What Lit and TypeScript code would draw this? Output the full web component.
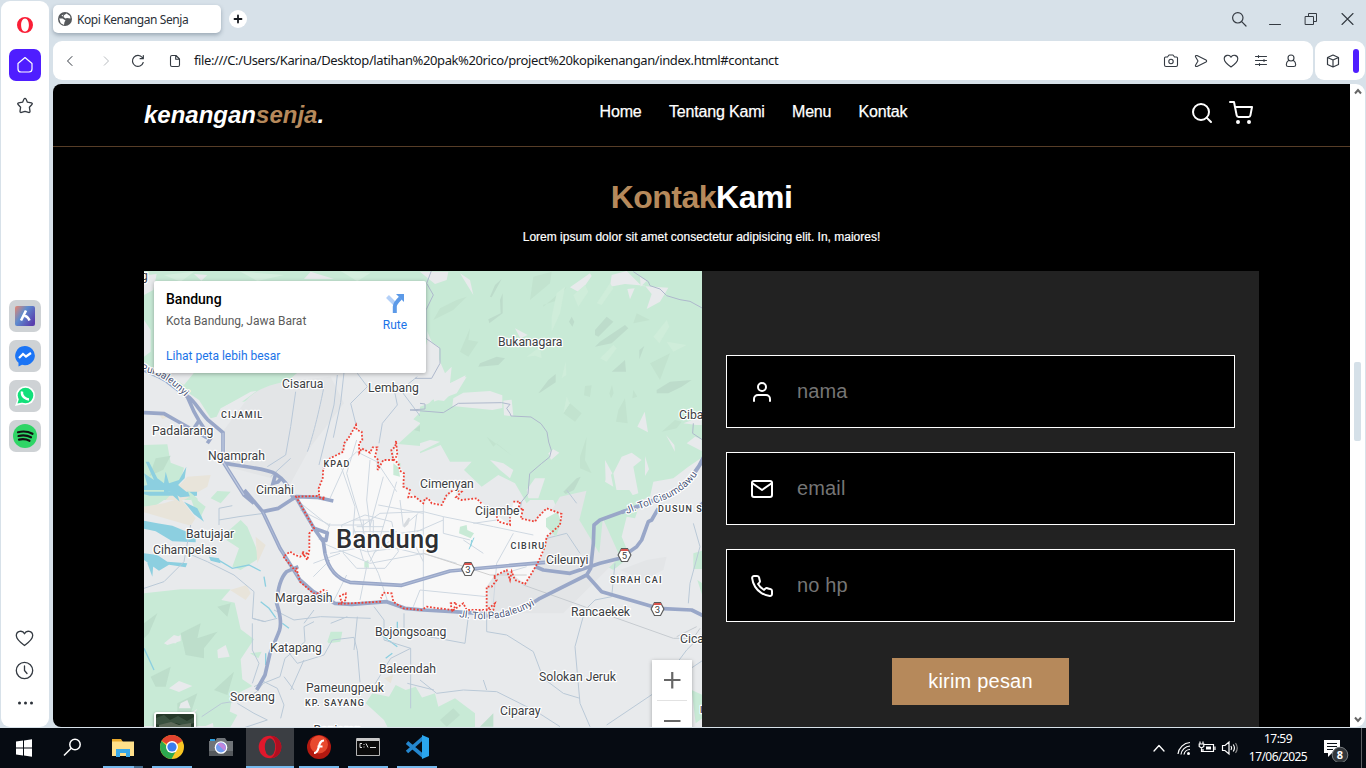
import { LitElement, html, css, svg } from "lit";
import { customElement } from "lit/decorators.js";

type Label = [number, number, string, string?];

const LABELS: Label[] = [
  [498, 346, "Bukanagara"], [282, 388, "Cisarua"], [368, 392, "Lembang"], [221, 417.5, "CIJAMIL", "caps"],
  [152, 435, "Padalarang"], [208, 460, "Ngamprah"], [323.5, 467, "KPAD", "caps"], [256, 494, "Cimahi"],
  [420, 488, "Cimenyan"], [475, 514.5, "Cijambe"], [679, 419, "Ciba"], [658, 512, "DUSUN S", "caps"],
  [186, 538, "Batujajar"], [153, 554, "Cihampelas"], [510.5, 549, "CIBIRU", "caps"], [546, 564, "Cileunyi"],
  [610, 583, "SIRAH CAI", "caps"], [275, 602, "Margaasih"], [571, 616, "Rancaekek"], [375, 636, "Bojongsoang"],
  [680, 643, "Cica"], [270, 652, "Katapang"], [379, 673, "Baleendah"], [539, 681, "Solokan Jeruk"],
  [306, 692, "Pameungpeuk"], [305, 706, "KP. SAYANG", "caps"], [230, 701, "Soreang"], [500, 715, "Ciparay"],
  [313.5, 734, "Banjaran"], [700, 713, "I", "caps"], [141, 280, "g"],
];

@customElement("city-map")
class CityMap extends LitElement {
  static styles = css`
    :host { display: block; position: relative; overflow: hidden; background: #e8eaec; }
    .canvas { display: block; width: 558px; height: 456px; }
    .place { font: 12.2px Roboto, sans-serif; fill: #3c4043; stroke: #fff; stroke-width: 2.4px; paint-order: stroke; stroke-linejoin: round; }
    .caps { font-size: 9px; font-weight: 500; letter-spacing: 1.1px; }
    .city { font-size: 25.5px; font-weight: 500; fill: #2d2f33; stroke-width: 3px; }
    .way { font-size: 10.1px; fill: #4a5578; }
    .card { position: absolute; left: 10px; top: 10px; width: 272px; height: 92px; box-sizing: border-box; padding: 10px 12px;
      background: #fff; border-radius: 2px; box-shadow: 0 1px 4px rgba(0,0,0,.3); display: flex; justify-content: space-between;
      font-family: Roboto, sans-serif; font-size: 12px; }
    .name { font-size: 14px; font-weight: 500; line-height: 16px; color: #000; }
    .addr { color: #5b5b5b; line-height: 16px; margin-top: 6px; }
    .more { color: #1a73e8; line-height: 16px; margin-top: 19px; }
    .route { width: 38px; color: #1a73e8; text-align: center; line-height: 14px; }
    .route svg { display: block; margin: 2px auto 5px; }
    .zoom { position: absolute; right: 10px; top: 389px; width: 40px; height: 81px; background: #fff; box-shadow: 0 1px 4px rgba(0,0,0,.3); }
    .zoom svg { display: block; }
    .sat { position: absolute; left: 10px; top: 441px; width: 38px; height: 38px; border: 2px solid #fff; border-radius: 3px; box-shadow: 0 1px 3px rgba(0,0,0,.4); background: #263a2a; }
  `;

  render() {
    return html`
      <svg class="canvas" viewBox="144 271 558 456">
        <!-- north-west forest -->
        <g transform="translate(144 270) scale(.33333)">
          <path fill="#c8ead6" d="M0 0H850V70L866 110 850 150V300L800 210 700 100 30 100V200L50 300 120 345 150 308 460 308 425 338 405 362 375 358 300 395 275 392 230 415 218 440 200 445 165 390 128 365 60 320 0 275Z"/>
          <path fill="#d5efdf" d="M60 15l90-10-40 30zM290 5l130 10-80 18zM590 3l90 5-40 26z"/>
          <path fill="#e8eaec" d="M0 40L12 15 38 12 28 60 0 75zM0 150l20 30v65L0 260zM150 12l40 3-18 17zM500 5l70 22H480zM240 410l80-45 18-2-48 35z"/>
          <path fill="#e3e5e7" d="M300 400C350 330 460 330 560 320L600 400 500 530 440 640 250 590 240 480Z"/>
          <path fill="#c8ead6" d="M0 525l70-2 10 55 40 15-12 45-20 20-30 32-58-10zM20 620l60-10 5 22 70 40-15 18H40zM870 385l-62 63 22 12-68 62 108 10zM750 575l20 5-4 42-14-8z"/>
          <path fill="#bddfcb" d="M35 565l45-8-22 42-42 20zM810 480l50-40v20l-30 25z"/>
          <path fill="#e8e4da" d="M130 620l70-5-10 35-70 40H65zM40 425l45 12-30 10z"/>
          <path fill="#8ccfe0" d="M0 610l30 20-25-55 10 0 25 50 20 15 5-35 10 35 30-10 22-40-5 35-20 20 25 20 32 0v12l-50 5-30-18-40 12-20 22-5-22-24 22V650l20-5z"/>
          <path fill="none" stroke="#b9c8d8" stroke-width="3" d="M455 365L440 470 425 555 370 590M540 350C520 450 500 520 490 545M600 308l-10 90-22 105M640 310l30 40-50 50 20 80-20 20M750 355l10 50-45 55-10 60M380 620l60-55M580 315l-10 90-45 180M820 320l-50 40 60 80"/>
          <path fill="none" stroke="#99a7c8" stroke-width="11" d="M0 300C50 320 90 340 130 378 150 390 165 420 190 448L237 488 237 575 300 675 330 700M0 428l60 3 50 28 80 45M70 335L130 380 150 425 165 452 200 505 190 520M165 452L150 475M237 578C290 590 370 595 395 612S430 640 450 690M395 612l-8 28 15-4 12-14"/>
          <path fill="none" stroke="#bdc8df" stroke-width="4" d="M0 300C50 320 90 340 130 378M237 488V575L300 675"/>
        </g>
        <!-- north-east highlands -->
        <g transform="translate(420 270) scale(.33333)">
          <path fill="#c8ead6" d="M20 0H850V560L805 590 760 625 700 635 690 680 640 700H660L645 745 620 740 605 800 630 860 580 900 510 860 480 690 445 695 430 760 400 690H330L320 700 285 640 235 615 185 650 132 600 155 575 90 575 62 525 0 550V410L110 370 140 320 90 340 95 290 75 310 20 180Z"/>
          <path fill="#e8eaec" d="M0 5h85l-5 25-35 12-25-20zM120 10l30 20 10 45zM450 52l60-42 5 8-35 50zM570 50l5-35 45-12 45 45 80 5-25 42-40 22 15-45-20-25-60-5zM622 57l22-2-14 33zM660 20l20 12-18 18zM285 175l38 20-22 10zM652 470l22-45 10 62zM738 495l25 30 2 20zM100 385l30-17 80-5 37 13v38l-30 6-120-12zM250 392l25-3 5 50-28-3zM555 570l22 40-20 25zM675 558l12 40-12 20zM580 610l25-50 30-12 30 22-25 20 15 80-60 20zM385 550l15-12 18 10-25 22zM210 570l40 10 30 20-10 25-30-25zM320 660l25-35 30 0-20 60-30 0zM790 460l55-20v25l-15 0zM800 520l25-20 20 8v35zM760 690l50-60 36-15v70z"/>
          <path fill="#e8eaec" d="M0 300l22-90 35 20v50L90 340l47-24-5 15-60 62-72-10zM0 545l60-30-30-5L0 520zM555 635l15-35 10 50zM420 700l20-10 5 20z"/>
          <path fill="#bddccb" d="M210 80l15-35 20-18-30 55zM240 90l8-20v60l-40 30-3-12 37-18zM525 180l35-40 20 15-45 45-10-5zM540 215l75-50 10 10-50 45-50 10zM575 305l40-35 3 35zM658 240l15-12-15 40zM355 370l30-40 22-18v25l-45 30zM710 360l40-25 65-5-30 20-40 20-35 0zM430 665l40-40 12-5-20 40-25 12zM455 140l8 15-6 15-10-15zM180 280l50-20 25 5-20 20-60 5z"/>
          <path fill="#c2e3cf" d="M60 115l50-25 30-10-40 40-60 30zM340 20l55-15-5 35-60 50zM595 420l20-35 8 75-35-5zM430 430l20-30 35 30-20 25zM495 348l20-2-5 35-18-5zM568 370l8-25 5 25-8 15zM640 360l12 20-15 5zM725 485l40-35 20 5-15 20zM120 245l30-70-5 35 30 5-30 45zM280 560l-50-40 20-20-30 30-20-30zM370 105l45-15 25-40-70 60zM480 560l20-60-5 70 20 40-35-15zM650 130l40 20-50 10zM690 280l60-30-30 80z"/>
          <path fill="#cfedda" d="M395 140l15-70 25-20-15 80-25 55zM460 75l35-30 10 20-30 45zM530 100l40-60 10 15-35 50zM425 325l12-50 2 40zM430 430l10-50 10 20zM540 265l40-40 10 10-30 40zM740 215l60 10-40 20zM700 200l40-50 8 20-30 50zM320 260l40-30 5 35-20-8z"/>
          <path fill="none" stroke="#aeb8cc" stroke-width="3" d="M35 0L20 40l20 35-22 45v85l42 30v45L35 325l-50 0M640 5l45 30 5 12 30 10 20 20 40 12 30 5 40 22M0 400l15 2v15l-45 3 100 8 45-28 130-2 25 5-10 12 10 15 3 8 60 3 30 20 18 25 5 30 8 25-5 20-25 20-35 30-5 60-20 25-10 60M820 460l-2 30 30 20"/>
          <path fill="none" stroke="#99a7c8" stroke-width="12" d="M858 545C815 660 730 680 605 727"/>
        </g>
        <!-- south-west plains, reservoir and hills -->
        <g transform="translate(144 490) scale(.33333)">
          <path fill="#c8ead6" d="M0 310l110-12 150 0-28 32 40 8 18 80 40 30-40 60 5 60 30 20-60 30-10 60-70 30H0zM130 0l30 25 15 60-20-20-15-40zM250 125l40-35 20 20 25 60 10 35-55 35-25-10 20-55-38-25zM0 0h60v30l-30 20-30 0zM200 25l20-22 40 2-30 35zM140 15l45 35-15 30zM550 455l10-30 35 0-6 30-35 5zM318 490l35-5-10 20zM205 690l30-35 45 20-20 35-50 10zM665 640l20-30 50 10 20-35 30 15 30-10 35 60v80H740l-20-40zM660 215l14 0 4 15-16 6z"/>
          <path fill="#b8d9c6" d="M0 400l40-30-25 60-15 15zM110 430l60-30-10 45 60-20-40 50 0 30-55-10zM20 560l60-30-15 60-30 0zM210 600l60-55-20 70zM100 640l60-30-20 60-40 0zM220 350l40-10-10 40z" opacity=".7"/>
          <path fill="#e8eaec" d="M60 460l30-25 18 5-12 20zM220 480l25-15 12 35-35 5zM75 595l30-22 40 15-40 18zM110 640l20-10 10 25-35 0zM110 685l50-28-20 30zM160 30l30-15-10 25zM60 460l50-25v18l-40 12z"/>
          <path fill="#e8e4da" d="M60 40l50-15 45 60-15 22-140-40V50zM335 140l30 25-25 55zM258 300l50-15 12 25-15 20zM720 565l28-10-8 25z"/>
          <path fill="#8ccfe0" d="M0 92l40 8 45 7 40 17 30 15 0 18-70-3-50-30-35-8zM0 5l70 0 25-5 12 35-20-18-70 0-20-5zM0 190l40 5 30 20 60 5-5 12-50-8-30 18-45-32zM195 200l30 5 5 15-30-8zM120 35l40 20 20 40-30-22zM30 200l-5 60-15-40z"/>
          <path fill="none" stroke="#8ccfe0" stroke-width="4" d="M215 205l50 30 50-10 35 18M350 335l25 20 20 28M0 475l30 65M415 400l20 15M700 425l60 45M760 395v40M725 505l20-15M365 490l0 35M360 260l5 30"/>
          <path fill="none" stroke="#bac9d7" stroke-width="3" d="M225 105V55l40-8M225 90l60-10 75-10M120 185l70 30 80 40 60 50-5 80 40 10M0 295l60-20 60-60 20-110M325 385l35 10 40-10M390 360l60 30 80-10 150 5M480 400l30-40M510 395l-30 15 3 45-60 50-15 55-50 20-20 25-40 25-65 10-60 40M330 590l30-15 40 20 20 50-10 40M325 400v80l20 40-20 60M420 470l40 50 80-25 25-45 65-8 10 40 8 95M440 600l40-90M450 600l-30-40M560 400l50-20M640 380l-10 100M690 350l30 40 0 60 80 25v180M780 370v50l-30 10M800 475l-60 30-55 90M870 600l-80-20M280 640l50 30 40 20-90 30"/>
        </g>
        <!-- south-east plains -->
        <g transform="translate(420 490) scale(.33333)">
          <path fill="#e3e5e7" d="M360 120L420 20 510 0 600 200 430 370 220 370 200 270ZM600 240l80-30 60-10-10 40-60 30z"/>
          <path fill="#c8ead6" d="M820 190l28-8v55l-28 0zM832 270l16 10v40zM815 600l32 15v70l-20 15zM0 625l45-15 10 40 50-25 60 45 0 45H0zM500 0h128l20 30-100 60-10 100-60-100z"/>
          <path fill="#bfe0cd" d="M60 690l40-35 20 20-40 35zM180 710l40-40 0 40z"/>
          <path fill="none" stroke="#bac9d7" stroke-width="3" d="M145 380l-10 80-135-25M200 370l0 55 60 10 80 50 30 80 60 45 50 15M480 640l-15-170 30-110 30-30 50-10 10-100M480 640l30 70M0 570l50 40 80-10 100 5 120 60 70 45M200 600l-10-30M820 100l20 70-30 110-5 60M850 430l-50 50-60 80M850 510L560 705M440 0l30 40M360 150l80-20 40 60"/>
          <path fill="none" stroke="#c6cbd0" stroke-width="3" d="M310 285l450 160h60l20-30M770 440l60-30"/>
          <path fill="none" stroke="#99a7c8" stroke-width="11" stroke-linejoin="round" d="M612 64L540 90 522 105 520 160 512 235 500 255 360 325Q290 375 190 378M860 30l-28 24M715 55l-20 35-10 5-20 55-15 20-50 35-60 15-90 30-80-10-35-15M500 255l45 50 170 50 100 5 40 20"/>
        </g>
        <!-- city boundary, roads and motorways -->
        <g transform="translate(280 410) scale(.33333)">
          <path fill="#f8f8f8" d="M118 262L118 230 128 205 130 175 150 145 190 125 205 85 228 45 245 65 240 125 270 120 290 110 288 180 310 150 340 150 348 92 355 160 372 190 370 230 405 260 430 280 445 265 485 285 520 240 545 270 590 265 650 315 690 345 700 275 720 280 725 325 765 335 800 295 845 312 840 345 800 380 785 440 735 522 680 480 640 500 620 530 620 600 520 600 400 600 340 575 160 582 100 550 60 515 10 440 30 425 80 440 95 360 50 262Z"/>
          <path fill="#c8ead6" d="M798 325l35-20 10 30-15 45-30-30zM340 160l15 12 5 28-20-5zM540 350l20-5 2 15 20 10-10 15-35-15zM253 455l12-5 2 23-14 0z"/>
          <path fill="none" stroke="#cfd8e1" stroke-width="3" d="M60 300l90 45 100 0 50-35 130-5 60 15 150 30 120 25M150 265l50-110 30-30 60 30 60 90M430 285v320M490 320v50l80 20M580 340l70-10M700 370l-50 90-10 120M230 90l-30 100 50 170 15 70 30 60 30 90M180 160l45 130-5 60 30 100M270 150l-10 120 10 80M310 200l-40 150M350 215l-60 200-20 40M295 285l135 25M150 340l-20 60 140 60 160-30 100 30M150 430l80-15 30 10 90-10 80 20M190 430l40 45h85l40-50-20-90-80-20-70 30zM260 470l-20 100M370 350l-10-80M280 430l80-60 70-10M100 500l50-50M160 575l40-80M220 330h60v50h-60zM230 350h80M250 330v80M270 330v80M220 365h130M400 590l20-50 200 20M640 500l100-30M100 460l80-30M410 315l-10 80 30 60M380 340l35-30M50 270l100 80M490 330l-80 35M610 430l-60-40"/>
          <path fill="none" stroke="#cfcfcf" stroke-width="3" d="M430 430l200 65 110 0"/>
          <path fill="none" stroke="#8cd1df" stroke-width="3" d="M582 383l-15 35M575 390l-3 20"/>
          <path fill="#d6dade" d="M370 345l15-22 5 2-5 18-12 10z"/>
          <g fill="none" stroke="#99a7c8" stroke-width="11" stroke-linejoin="round">
            <path d="M-107 240L-52 305 0 415 60 510 100 545 165 580 215 583 320 575 375 595 430 600 520 605 620 612"/>
            <path d="M-52 305L-5 295 48 260 110 262 160 273M48 262L102 355 130 395 135 430Q150 500 210 517L365 526 510 483 795 457M102 355l40 14-4 22-20-8"/>
            <path d="M55 470L20 485Q-5 510-10 580 10 640-5 670L-30 730-45 795-70 840"/>
          </g>
          <g fill="none" stroke="#b1bdd8" stroke-width="3"><path d="M135 430Q150 500 210 517L365 526 510 483 795 457M-52 305L0 415 60 510"/></g>
          <path fill="none" stroke="#ee4136" stroke-width="5.4" stroke-dasharray="5.4 5.2" d="M133 268L118 262 116 235 128 205 130 175 150 145 190 125 192 100 205 85 228 45 230 60 245 65 247 90 237 100 238 128 245 115 270 128 278 112 292 112 285 140 295 150 293 180 310 150 340 150 334 120 346 110 348 92 352 135 342 150 355 160 360 182 372 190 370 230 390 240 385 262 405 260 430 280 435 265 445 265 455 280 485 285 500 255 520 240 545 245 528 262 545 270 590 265 604 280M650 318L655 335 690 345 690 322M700 275L720 275 715 300 730 295 722 325 765 335 775 320 800 295 845 312 840 345 800 380 795 410 775 455 755 490 735 522 705 510 695 485 690 510 680 480 640 500 650 510 635 530 620 530 620 600 645 580 640 600 560 600 550 580 520 600 530 578 512 580 515 600 440 590 425 600 370 595 340 575 335 550 310 548 303 565M303 575L175 582 198 570 197 550 180 558 185 580M143 545L130 540 115 550 100 550 60 515 48 470M48 485L10 440 30 425 45 435 60 440 80 430 65 425 82 450 88 420 88 370 102 355 48 260 110 258 133 268 130 260"/>
        </g>
        ${[[468, 569, "3"], [624.5, 555, "5"], [657.5, 609, "3"]].map(([x, y, n]) => svg`
          <path d="M${+x - 3} ${+y - 6.5}h6l3.4 6.5-3.4 6.5h-6l-3.4-6.5z" fill="#fff" stroke="#5c5c5c" stroke-width="1.2"/>
          <path d="M${+x - 3} ${+y - 6}h6l1.2 2h-8.4z" fill="#d9534c"/>
          <text class="place" x=${x} y=${+y + 4} text-anchor="middle" style="font-size:9.5px;stroke:none">${n}</text>`)}
        ${LABELS.map(([x, y, t, k]) => svg`<text class="place ${k ?? ""}" x=${x} y=${y}>${t}</text>`)}
        <text class="place city" x="336" y="547.5" textLength="103">Bandung</text>
        <path id="cis" d="M627 514C655 502 683 499 700 470" fill="none"/>
        <path id="pad" d="M459 617C490 622 512 619 545 599" fill="none"/>
        <path id="pur" d="M140 371C160 374 171 382 190 402" fill="none"/>
        <text class="place way"><textPath href="#cis">Jl. Tol Cisumdawu</textPath></text>
        <text class="place way"><textPath href="#pad">Jl. Tol Padaleunyi</textPath></text>
        <text class="place way"><textPath href="#pur">Purbaleunyi</textPath></text>
      </svg>
      <div class="card">
        <div><div class="name">Bandung</div><div class="addr">Kota Bandung, Jawa Barat</div><div class="more">Lihat peta lebih besar</div></div>
        <div class="route">
          <svg width="20" height="20" viewBox="0 0 20 20"><path d="M2.5 3.5L10 11" stroke="#b3d0f8" stroke-width="4"/><path d="M9.8 20V13.5Q9.8 10.5 15.5 5" fill="none" stroke="#5c9ae8" stroke-width="4"/><path d="M11 1h8v8z" fill="#5c9ae8"/></svg>
          Rute
        </div>
      </div>
      <div class="sat"><svg width="38" height="14" viewBox="0 0 38 14"><path d="M0 4l8-3 6 5 8-4 9 5 7-4v6l-9 3-9-3-9 4-11-3z" fill="#3a5140"/><path d="M3 11l12-3 8 3 12-2v5H3z" fill="#5d6a5a"/></svg></div>
      <div class="zoom"><svg width="40" height="81" viewBox="0 0 40 81"><path d="M12 20h16.500M20.250 12v16.500M12 61h16.500" stroke="#666" stroke-width="2.2"/><path d="M5 40.500h30" stroke="#e2e2e2"/></svg></div>
    `;
  }
}

const line = (w: number, h: number, body: unknown, sw = 1.2, color = "#343a42") => html`
  <svg width=${w} height=${h} viewBox="0 0 ${w} ${h}" fill="none" stroke=${color} stroke-width=${sw} stroke-linecap="round" stroke-linejoin="round">${body}</svg>`;
const feather = (body: unknown) => html`
  <svg width="24" height="24" viewBox="0 0 24 24" fill="none" stroke="#fff" stroke-width="2" stroke-linecap="round" stroke-linejoin="round">${body}</svg>`;

const ICONS = {
  search: feather(svg`<circle cx="11" cy="11" r="8"/><path d="M21 21l-4.350-4.350"/>`),
  cart: feather(svg`<circle cx="9" cy="21" r="1"/><circle cx="20" cy="21" r="1"/><path d="M1 1h4l2.680 13.390a2 2 0 0 0 2 1.610h9.720a2 2 0 0 0 2-1.610L23 6H6"/>`),
  user: feather(svg`<path d="M20 21v-2a4 4 0 0 0-4-4H8a4 4 0 0 0-4 4v2"/><circle cx="12" cy="7" r="4"/>`),
  mail: feather(svg`<path d="M4 4h16c1.100 0 2 .9 2 2v12c0 1.100-.9 2-2 2H4c-1.100 0-2-.9-2-2V6c0-1.100.9-2 2-2z"/><path d="M22 6l-10 7L2 6"/>`),
  phone: feather(svg`<path d="M22 16.920v3a2 2 0 0 1-2.180 2 19.790 19.790 0 0 1-8.630-3.070 19.500 19.500 0 0 1-6-6 19.790 19.790 0 0 1-3.070-8.670A2 2 0 0 1 4.110 2h3a2 2 0 0 1 2 1.720 12.840 12.840 0 0 0 .7 2.810 2 2 0 0 1-.45 2.110L8.090 9.910a16 16 0 0 0 6 6l1.270-1.270a2 2 0 0 1 2.110-.45 12.840 12.840 0 0 0 2.810.7A2 2 0 0 1 22 16.920z"/>`),
};

@customElement("coffee-page")
class CoffeePage extends LitElement {
  static styles = css`
    :host { display: block; background: #000; color: #fff; font-family: "Liberation Sans", Arial, sans-serif; overflow: hidden; border-radius: 8px 0 0 8px; }
    header { height: 62px; border-bottom: 1px solid #573d27; padding: 0 97px 0 91px; display: flex; justify-content: space-between; }
    .logo { font-size: 24px; font-weight: 700; font-style: italic; line-height: 28px; padding-top: 17px; width: 410px; }
    .accent { color: #b6895b; }
    nav { display: flex; gap: 27.3px; font-size: 16px; line-height: 18px; padding-top: 19px; letter-spacing: -.17px; -webkit-text-stroke: .25px #fff; }
    .tools { display: flex; justify-content: flex-end; gap: 15px; padding-top: 17px; width: 300px; }
    .tools svg { display: block; }
    h2 { margin: 0; padding-top: 32px; text-align: center; font-size: 32px; line-height: 37px; letter-spacing: -.5px; }
    p { margin: 14px 0 0; text-align: center; font-size: 12px; line-height: 14px; -webkit-text-stroke: .2px #fff; }
    .row { display: flex; margin: 27px 91px 0; width: 1115px; }
    city-map { width: 558px; height: 456px; }
    form { flex: 1; background: #222; padding: 84px 24px 0; height: 372px; }
    .field { height: 71px; border: 1px solid #fff; background: #000; margin-bottom: 24px; display: flex; align-items: center; padding-left: 23px; gap: 23px; color: #757575; font-size: 20px; }
    .field span { padding-bottom: 1px; letter-spacing: .15px; }
    .send { width: 177px; height: 47px; margin: 36px auto 0; background: #b6895b; font-size: 20px; line-height: 46px; text-align: center; letter-spacing: .2px; }
  `;
  render() {
    return html`
      <header>
        <div class="logo">kenangan<span class="accent">senja</span>.</div>
        <nav><span>Home</span><span>Tentang Kami</span><span>Menu</span><span>Kontak</span></nav>
        <div class="tools">${ICONS.search}${ICONS.cart}</div>
      </header>
      <h2><span class="accent">Kontak</span>Kami</h2>
      <p>Lorem ipsum dolor sit amet consectetur adipisicing elit. In, maiores!</p>
      <div class="row">
        <city-map></city-map>
        <form>
          <div class="field">${ICONS.user}<span>nama</span></div>
          <div class="field">${ICONS.mail}<span>email</span></div>
          <div class="field">${ICONS.phone}<span>no hp</span></div>
          <div class="send">kirim pesan</div>
        </form>
      </div>`;
  }
}

const TASKS = [
  { cls: "start", icon: svg`<path fill="#fff" d="M4 6.500l7-1v7H4zM12 5.400l8-1.200v8.300h-8zM4 13.500h7v7l-7-1zM12 13.500h8v8.200l-8-1.100z"/>` },
  { cls: "start", icon: svg`<g fill="none" stroke="#fff" stroke-width="1.500"><circle cx="15" cy="9.500" r="5.200"/><path d="M11.200 13.300L4 20.500"/></g>` },
  { cls: "run two", icon: svg`<path fill="#e8a92c" d="M1 4h9l2 3h10v14H1z"/><path fill="#ffe08a" d="M1 6.500h22V21H1z"/><path fill="#3aa9e8" d="M5 14h14v8h-4v-4H9v4H5z"/>` },
  { cls: "run", icon: svg`<circle cx="12" cy="12" r="12" fill="#f9c623"/><path fill="#e1432f" d="M12 12L1.600 6A12 12 0 0 1 22.400 6z"/><path fill="#2da94f" d="M1.600 6A12 12 0 0 0 11.500 24l5-9-4.500-3-3 1z"/><circle cx="12" cy="12" r="6" fill="#fff"/><circle cx="12" cy="12" r="4.600" fill="#3b7ded"/>` },
  { cls: "", icon: svg`<path fill="#2b9fe0" d="M1 4h5v3H1z"/><path fill="#6f7478" d="M0 6h6l2-3h8l2 3h6v15H0z"/><path fill="#55595d" d="M0 16h24v5H0z"/><circle cx="12" cy="12.500" r="6.300" fill="#fff"/><circle cx="12" cy="12.500" r="5" fill="#6f9df0"/><path fill="#c286dc" d="M8.500 9a5 5 0 0 1 7 7z"/>` },
  { cls: "run active", icon: svg`<ellipse cx="12" cy="12" rx="11.300" ry="11.300" fill="#e0182c"/><ellipse cx="12" cy="12" rx="5.200" ry="8.800" fill="#3d4045"/><path d="M12 .7a11.300 11.300 0 0 1 0 22.600c8-3 8-19.600 0-22.600" fill="#b00f20"/>` },
  { cls: "run", icon: svg`<circle cx="12" cy="12" r="12" fill="#b31910"/><circle cx="12" cy="9.500" r="9" fill="#e8492e"/><path fill="none" stroke="#fff" stroke-width="2.200" d="M17 5.500c-4 0-4.500 4-5.500 7.500S9 18 7 18M10.500 11.500h5"/>` },
  { cls: "run", icon: svg`<path fill="#0b0b0b" stroke="#b4b4b4" d="M.5 3.500h23v17H.5z"/><path fill="#c8c8c8" d="M1 3h22v3H1z"/><path stroke="#ddd" fill="none" d="M6 8.500H4v4h2M8 9v1M8 11.500v1M10 8.500l2 4M14 12.500h6"/>` },
  { cls: "run", icon: svg`<path fill="none" stroke="#2487cf" stroke-width="3.600" d="M18 3L2 17M18 21L2 7.500"/><path fill="#2aa6ee" d="M17 0l7 3v18l-7 3z"/>` },
];

@customElement("app-root")
class AppRoot extends LitElement {
  static styles = css`
    :host { display: block; width: 1366px; height: 768px; overflow: hidden; background: #d7e1e9; font-family: "Noto Sans", sans-serif; }
    svg { display: block; flex: none; }
    .window { display: flex; height: 728px; box-sizing: border-box; padding: 1px 1px 1px; gap: 4px; }
    .side { width: 48px; background: #fff; border-radius: 9px; display: flex; flex-direction: column; align-items: center; }
    .side .opera { margin-top: 15px; }
    .home { margin-top: 15px; width: 32px; height: 32px; background: #4f1eff; border-radius: 7px; display: grid; place-items: center; }
    .star { margin-top: 16px; }
    .apps { margin-top: 185px; display: flex; flex-direction: column; gap: 8px; }
    .app { width: 32px; height: 32px; border-radius: 7px; background: #ced2d5; display: grid; place-items: center; }
    .bottom { margin-top: auto; display: flex; flex-direction: column; align-items: center; gap: 13px; padding: 0 1px 15px 0; }
    .bottom .dots { margin-top: 1px; }
    .main { flex: 1; display: flex; flex-direction: column; }
    .tabs { height: 40px; display: flex; align-items: flex-start; padding-top: 4px; box-sizing: border-box; }
    .tab { width: 168px; height: 28px; background: #fff; border-radius: 5px; box-shadow: 0 2px 4px rgba(60,80,100,.4); display: flex; align-items: center; gap: 5px; padding-left: 5px; box-sizing: border-box; font-size: 12px; color: #2a3038; white-space: nowrap; }
    .title { letter-spacing: -.42px; }
    .plus { margin: 5px 0 0 8px; width: 18px; height: 18px; border-radius: 9px; background: #fff; display: grid; place-items: center; }
    .win { margin: 6px 10px 0 auto; display: flex; gap: 20px; }
    .bar { display: flex; gap: 2px; height: 39px; }
    .addr { width: 1260px; background: #fff; border-radius: 9px; display: flex; align-items: center; padding: 0 14px 0 9px; box-sizing: border-box; }
    .nav { display: flex; gap: 18px; }
    .doc { margin-left: 21px; }
    .url { margin: -2px 0 0 11px; font-size: 13px; letter-spacing: -.4px; color: #15181c; white-space: nowrap; }
    .acts { margin-left: auto; display: flex; gap: 14px; }
    .ext { width: 50px; background: #fff; border-radius: 9px; display: flex; align-items: center; padding-left: 10px; box-sizing: border-box; gap: 12px; }
    .pill { width: 6px; height: 24px; border-radius: 3px; background: #4f1eff; }
    .view { display: flex; margin-top: 4px; height: 643px; }
    coffee-page { width: 1297px; height: 643px; }
    .scroll { width: 15px; background: #fff; border-radius: 0 9px 9px 0; display: flex; flex-direction: column; align-items: center; }
    .scroll svg { margin-top: 4px; }
    .thumb { width: 7px; height: 79px; border-radius: 2px; background: #d5e0e8; margin: 267px 0 0; }
    .scroll .down { margin: auto 0 4px; }
    .taskbar { height: 40px; background: #060b12; display: flex; }
    .task { width: 48px; height: 40px; margin-right: 1px; box-sizing: border-box; display: grid; place-items: center; border-bottom: 2px solid transparent; position: relative; }
    .start { margin-right: 0; }
    .start + .two { margin-left: 3px; }
    .run::after { content: ""; position: absolute; left: 4px; bottom: -2px; width: 40px; height: 2px; background: #76b9ed; }
    .two::after { background: linear-gradient(90deg, #76b9ed 31px, #456d8e 31px); }
    .active { background: #3b3e43; }
    .active::after { left: 0; width: 48px; }
    .tray { margin-left: auto; display: flex; align-items: center; color: #fff; }
    .tray svg { margin-right: 5px; }
    .tray .wifi { margin-left: 3px; }
    .clock { width: 68px; margin: 0 11px 0 0; font-size: 12px; letter-spacing: -.55px; line-height: 18px; text-align: center; white-space: nowrap; }
    .tray .note { margin-right: 12px; }
    .edge { width: 5px; height: 40px; border-left: 1px solid #5d6064; box-sizing: border-box; }
    .num { font: 700 11px "Noto Sans", sans-serif; fill: #fff; }
  `;

  render() {
    return html`
      <div class="window">
        <aside class="side">
          <svg class="opera" width="18" height="18" viewBox="0 0 18 18"><path fill="#fa1e36" fill-rule="evenodd" d="M9 1a8 8 0 1 1 0 16A8 8 0 0 1 9 1zM9 2.400c-2.500 0-3.900 3-3.900 6.600s1.400 6.600 3.900 6.600 3.900-3 3.900-6.600S11.500 2.400 9 2.400z"/></svg>
          <div class="home">${line(18, 18, svg`<path d="M2 7.500L9 1.500l7 6v5.500q0 3-3 3H5q-3 0-3-3z"/>`, 1.2, "#fff")}</div>
          <div class="star">${line(18, 18, svg`<path d="M9 1.300q.7 0 1 .8l1.400 3.100 4 .7q1.500.5.500 1.600l-2.500 2.800.6 3.900q0 1.600-1.500 1.200L9 14.300l-3.500 1.100Q4 15.800 4 14.200l.6-3.900L2.100 7.500q-1-1.100.5-1.600l4-.7L8 2.100q.3-.8 1-.8z"/>`, 1.3)}</div>
          <div class="apps">
            <div class="app"><svg width="20" height="20" viewBox="0 0 20 20"><defs><linearGradient id="ai" x2="1" y2=".7"><stop stop-color="#e9866d"/><stop offset=".45" stop-color="#5d8ccf"/><stop offset="1" stop-color="#5a3fae"/></linearGradient></defs><rect width="20" height="20" rx="2" fill="url(#ai)"/><path d="M11 4.500L6 14.500M9.500 10q3 0 5 4.500" stroke="#fff" stroke-width="2.600" fill="none"/></svg></div>
            <div class="app"><svg width="22" height="22" viewBox="0 0 22 22"><path fill="#1b74f5" d="M11 1a10 9.600 0 1 1-3 18.800L4.500 21.500v-3.700A9.600 9.600 0 0 1 11 1z"/><path d="M5 13l4-4 3 2.500L17 8" stroke="#fff" stroke-width="2.200" fill="none"/></svg></div>
            <div class="app"><svg width="20" height="20" viewBox="0 0 20 20"><circle cx="10.500" cy="9.500" r="9.500" fill="#fff"/><path fill="#fff" d="M0 20l3-8 5 6z"/><circle cx="10.500" cy="9.500" r="7.800" fill="#12e07a"/><path fill="#12e07a" d="M2.500 17.500l1.500-5 3.500 4z"/><path d="M7 5.500q-.7 3.500 2 5.700t5 2.300" stroke="#fff" stroke-width="2.400" fill="none"/></svg></div>
            <div class="app"><svg width="24" height="24" viewBox="0 0 24 24"><circle cx="12" cy="12" r="12" fill="#2fd566"/><path d="M5 8.200q8-2 14.500 1.600M5.500 12q7-1.600 12.500 1.300M6 15.600q6-1.200 10.500 1.200" fill="none" stroke="#111" stroke-width="2.200" stroke-linecap="round"/></svg></div>
          </div>
          <div class="bottom">
            ${line(19, 19, svg`<path d="M9.500 16.500C4 12.500 1.300 9.500 1.300 6.500a4.300 4.300 0 0 1 8.200-1.700 4.300 4.300 0 0 1 8.200 1.700c0 3-2.700 6-8.200 10z"/>`, 1.3)}
            ${line(19, 19, svg`<circle cx="9.500" cy="9.500" r="8.200"/><path d="M9.500 5v4.500l2.500 3"/>`, 1.3)}
            <svg class="dots" width="18" height="18" viewBox="0 0 18 18" fill="#2b3139"><circle cx="3.500" cy="9" r="1.500"/><circle cx="9.500" cy="9" r="1.500"/><circle cx="15.500" cy="9" r="1.500"/></svg>
          </div>
        </aside>
        <div class="main">
          <div class="tabs">
            <div class="tab">
              <svg width="14" height="14" viewBox="0 0 14 14"><circle cx="7" cy="7" r="7" fill="#55585b"/><path d="M8.500 1.500L6 3.200 5.500 5l2 1.500 1.500-.5 3.500.5-.5-2.500zM1.200 6.500h3.300l3 2-1 1.500-.5 3-3.300-1.800zM3.500 3.500l2-1-1 2z" fill="#fff"/></svg>
              <span class="title">Kopi Kenangan Senja</span>
            </div>
            <div class="plus">${line(10, 10, svg`<path d="M5 1.500v7M1.500 5h7"/>`, 1.8, "#15191f")}</div>
            <div class="win">
              ${line(16, 16, svg`<circle cx="6.800" cy="6.800" r="5.200"/><path d="M10.700 10.700L15 15"/>`, 1.200)}
              ${line(16, 16, svg`<path d="M2.500 13.500h11"/>`, 1)}
              ${line(16, 16, svg`<path d="M2.500 5.500h8v8h-8zM5.500 5.500v-3h8v8h-3"/>`, 1)}
              ${line(16, 16, svg`<path d="M3 2.500l11 11M14 2.500L3 13.500"/>`, 1.100)}
            </div>
          </div>
          <div class="bar">
            <div class="addr">
              <div class="nav">
                ${line(16, 16, svg`<path d="M10 3.500L5.500 8l4.500 4.500"/>`, 1)}
                <svg width="16" height="16" viewBox="0 0 16 16"><path d="M8 3.500l4.500 4.500L8 12.500" stroke="#b8bcc0" fill="none"/></svg>
                ${line(16, 16, svg`<path d="M13.200 9.500A5.500 5.500 0 1 1 12.300 4.500M13.300 2.500v3.200h-3.200"/>`, 1.2)}
              </div>
              <div class="doc">${line(16, 16, svg`<path d="M5 2.500h4l3.500 3.500v6q0 1.500-1.500 1.500H5q-1.500 0-1.500-1.500V4q0-1.500 1.500-1.500zM8.700 2.700v3.500h3.700"/>`, 1.1)}</div>
              <span class="url">file:///C:/Users/Karina/Desktop/latihan%20pak%20rico/project%20kopikenangan/index.html#contanct</span>
              <div class="acts">
                ${line(16, 16, svg`<path d="M1.500 5q0-1 1-1h2l1.500-2h4l1.500 2h2q1 0 1 1v7q0 1.500-1.500 1.500H3q-1.500 0-1.500-1.500z"/><circle cx="8" cy="8.500" r="2.200"/>`, 1.1)}
                ${line(16, 16, svg`<path d="M2.500 3.800Q2 2 4 2.600l9 4.400q1.300 1 0 2l-9 4.400Q2 14 2.500 12.200L5 8z"/>`, 1.1)}
                ${line(16, 16, svg`<path d="M8 14C3.500 11 1.200 8.500 1.200 5.800A3.600 3.600 0 0 1 8 4.200a3.600 3.600 0 0 1 6.800 1.600C14.800 8.500 12.500 11 8 14z"/>`, 1.1)}
                ${line(16, 16, svg`<path d="M2.500 3.500h11M2.500 7.500h11M2.500 11.500h11M5.500 2.500v2M11 6.500v2M6.500 10.500v2"/>`, 1.1)}
                ${line(16, 16, svg`<circle cx="8" cy="5" r="3"/><path d="M5.500 7.500q-2.200 1.500-2.200 4.200 0 1.800 2 1.800h5.400q2 0 2-1.800 0-2.700-2.200-4.200"/>`, 1.1)}
              </div>
            </div>
            <div class="ext">${line(16, 16, svg`<path d="M8 2l5.500 2.500v7L8 14l-5.500-2.500v-7zM2.500 4.500L8 7l5.500-2.500M8 7v7"/>`, 1.2)}<div class="pill"></div></div>
          </div>
          <div class="view">
            <coffee-page></coffee-page>
            <div class="scroll">
              <svg width="8" height="7" viewBox="0 0 8 7"><path d="M1 5.500L4 2l3 3.500" fill="none" stroke="#666" stroke-width="2"/></svg>
              <div class="thumb"></div>
              <svg class="down" width="8" height="7" viewBox="0 0 8 7"><path d="M1 1.500L4 5l3-3.500" fill="none" stroke="#666" stroke-width="2"/></svg>
            </div>
          </div>
        </div>
      </div>
      <div class="taskbar">
        ${TASKS.map((t) => html`<div class="task ${t.cls}"><svg width="24" height="24" viewBox="0 0 24 24">${t.icon}</svg></div>`)}
        <div class="tray">
          ${line(16, 16, svg`<path d="M3 11l5-5.500 5 5.500"/>`, 1.3, "#fff")}
          <svg class="wifi" width="18" height="18" viewBox="0 0 18 18" fill="none" stroke="#fff" stroke-width="1.200"><path d="M3 15A13 13 0 0 1 15 3.500M6 15.500A9.500 9.500 0 0 1 15 7M9 15.500a6 6 0 0 1 6-5"/><circle cx="13.500" cy="14.500" r="1.500" fill="#fff" stroke="none"/></svg>
          <svg width="18" height="16" viewBox="0 0 18 16" fill="none" stroke="#fff" stroke-width="1.200"><path d="M6 4.500h9.500v7H5V9M17 6.500v3.500M2 1.500v2M5 1.500v2M1.200 4h4.600V6.500l-2.300 1.500L1.200 6.500zM3.500 8v3.500H5"/><path d="M8 6.500h5v3H8z" fill="#fff" stroke="none"/></svg>
          <svg width="18" height="16" viewBox="0 0 18 16" fill="none" stroke="#fff" stroke-width="1.200"><path d="M1.500 5.500H4L8 2v12L4 10.500H1.500zM10 6q1.300 2 0 4M12.200 4.500q2.500 3.500 0 7"/><path d="M14.500 3q3.500 5 0 10" stroke="#888"/></svg>
          <div class="clock">17:59<br>17/06/2025</div>
          <svg class="note" width="26" height="28" viewBox="0 0 26 28"><path d="M1 6h16v13H9l-4 4v-4H1z" fill="#fff"/><path d="M4 9.500h10M4 12.500h10M4 15.500h6" stroke="#0a1017" stroke-width="1.200"/><circle cx="17" cy="21" r="7.800" fill="#33373b" stroke="#777b7f"/><text class="num" x="17" y="25" text-anchor="middle">8</text></svg>
          <div class="edge"></div>
        </div>
      </div>`;
  }
}
